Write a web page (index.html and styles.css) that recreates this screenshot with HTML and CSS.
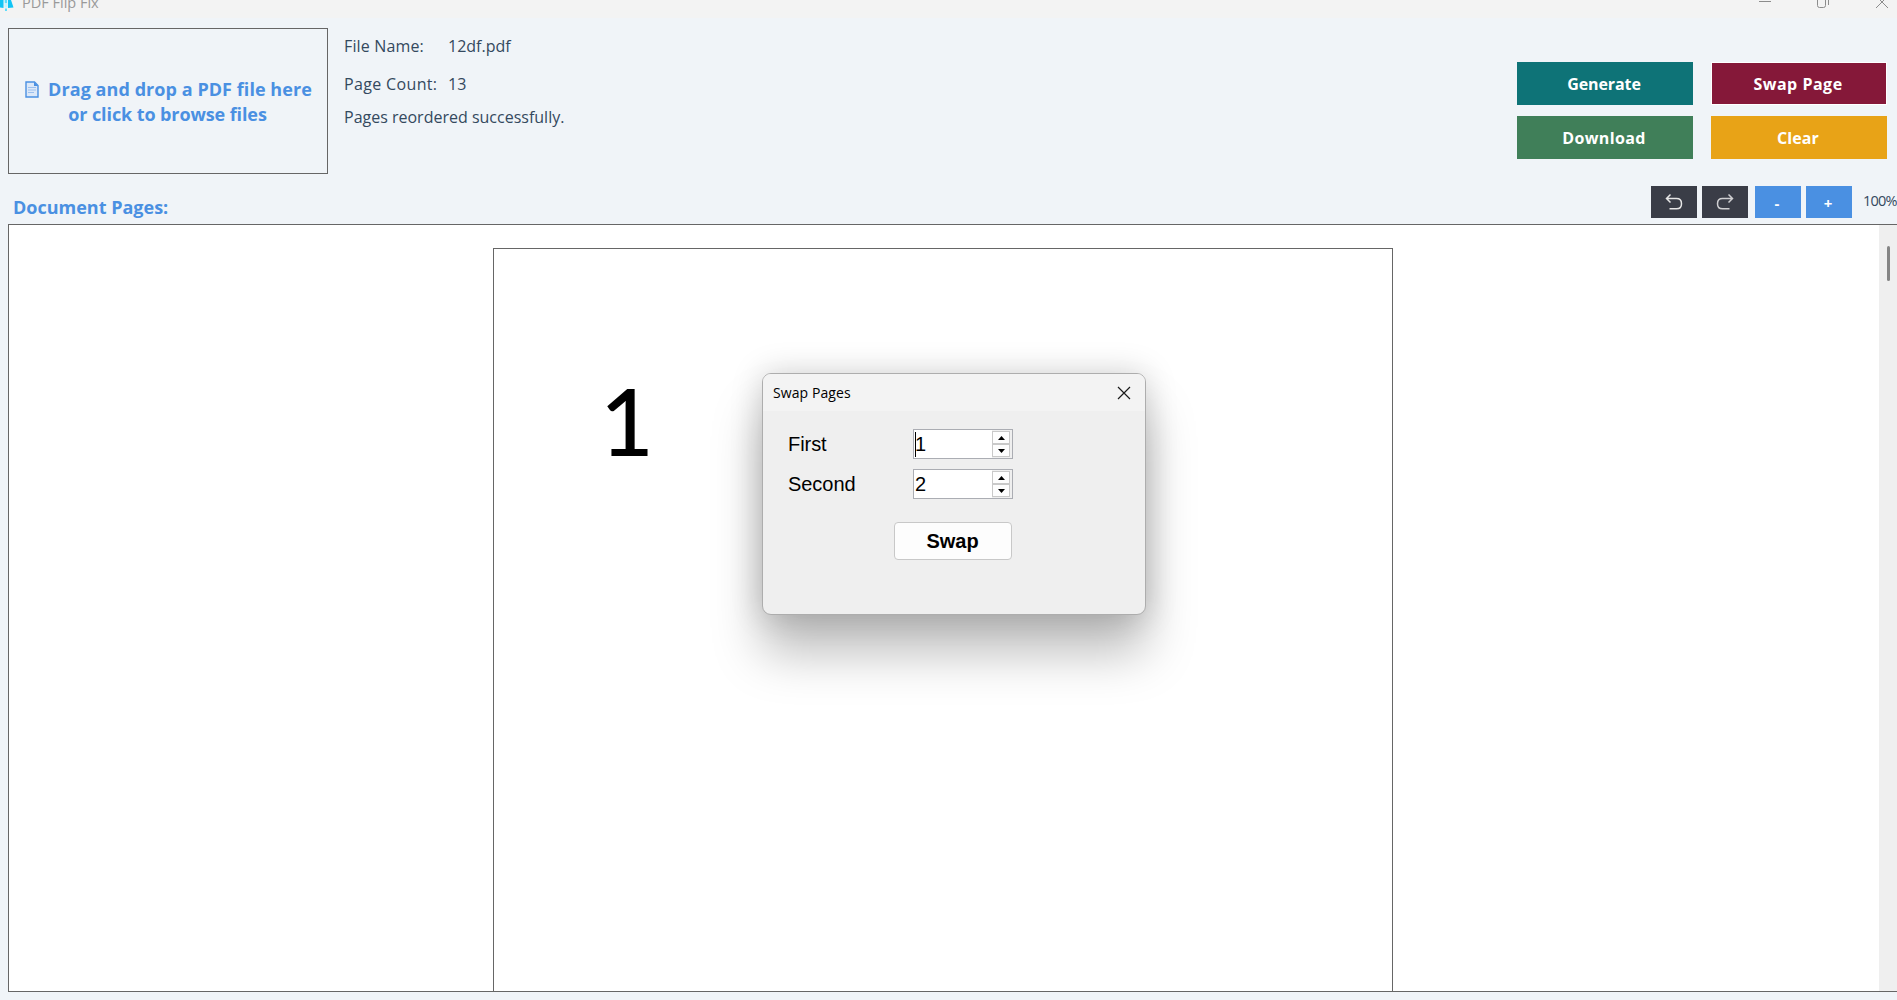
FILE: index.html
```html
<!DOCTYPE html>
<html lang="en">
<head>
<meta charset="utf-8">
<title>PDF Flip Fix</title>
<link rel="stylesheet" href="styles.css">
</head>
<body>
<div class="titlebar">
  <svg class="app-logo" width="14" height="12" viewBox="0 0 14 12"><path d="M0 0H3.500V8L0 7.500Z" fill="#12c4f5"/><path d="M8 0H11L13.500 7.500L8 8Z" fill="#12c4f5"/><path d="M4.500 0H7.500V7.500H4.500Z" fill="#c4f3ff"/><path d="M4.800 0H7V3H4.800ZM5 8.500H7V11H5Z" fill="#61dcfa"/></svg>
  <span class="app-title">PDF Flip Fix</span>
  <svg class="window-controls" width="134" height="10" viewBox="0 0 134 10" fill="none" stroke="#8c8c8c"><path d="M0 1.500H12"/><path d="M58.500 -2V5.500Q58.500 7.500 60.500 7.500H64.500Q66.500 7.500 66.500 5.500V-2M69.500 -2V5"/><path d="M117 8L129 -4M117 -4L129 8"/></svg>
</div>
<header class="header">
  <div class="dropzone">
    <div class="drop-line"><svg class="doc-icon" width="14" height="17" viewBox="0 0 14 17"><path d="M1 1H9.500L13 4.500V16H1Z" fill="#dce8f8" stroke="#4a90e2" stroke-width="1.400"/><path d="M9 1V5H13Z" fill="#4a90e2"/><path d="M3 6.500H11M3 9H11M3 11.500H9" stroke="#9cc0ee"/></svg><span class="drop-first">Drag and drop a PDF file here</span></div>
    <div class="drop-line"><span class="drop-second">or click to browse files</span></div>
  </div>
  <div class="info">
    <div class="info-row"><span class="info-label">File Name:</span><span>12df.pdf</span></div>
    <div class="info-row"><span class="info-label wide">Page Count:</span><span>13</span></div>
    <div class="info-row status"><span>Pages reordered successfully.</span></div>
  </div>
  <div class="actions">
    <button class="btn teal">Generate</button>
    <button class="btn wine">Swap Page</button>
    <button class="btn green">Download</button>
    <button class="btn amber">Clear</button>
  </div>
</header>
<div class="toolbar">
  <h1 class="section-title">Document Pages:</h1>
  <button class="tool dark"><svg width="18" height="18" viewBox="0 0 18 18" fill="none" stroke="#e6e6e6" stroke-width="1.500"><path d="M5.500 1.500L1.500 5.500L5.500 9.500M1.500 5.500H11.500Q16.500 5.500 16.500 10.700Q16.500 15.800 11.500 15.800H4.500"/></svg></button>
  <button class="tool dark redo"><svg width="18" height="18" viewBox="0 0 18 18" fill="none" stroke="#cfcfd1" stroke-width="1.500"><path d="M12.500 1.500L16.500 5.500L12.500 9.500M16.500 5.500H6.500Q1.500 5.500 1.500 10.700Q1.500 15.800 6.500 15.800H13.500"/></svg></button>
  <button class="tool blue">-</button>
  <button class="tool blue">+</button>
  <span class="zoom">100%</span>
</div>
<main class="viewer">
  <div class="canvas"><div class="page"><span class="page-number">1</span></div></div>
  <div class="scrollbar"><div class="thumb"></div></div>
</main>
<section class="dialog">
  <div class="dialog-title"><span>Swap Pages</span><svg width="14" height="14" viewBox="0 0 14 14" stroke="#1a1a1a" stroke-width="1.200"><path d="M1 1L13 13M13 1L1 13"/></svg></div>
  <div class="dialog-body">
    <div class="field"><label>First</label><div class="spin"><i class="caret"></i><span class="value">1</span><div class="steps"><b><svg width="7" height="4"><path d="M0 4L3.500 0L7 4Z"/></svg></b><b><svg width="7" height="4"><path d="M0 0L3.500 4L7 0Z"/></svg></b></div></div></div>
    <div class="field"><label>Second</label><div class="spin"><span class="value">2</span><div class="steps"><b><svg width="7" height="4"><path d="M0 4L3.500 0L7 4Z"/></svg></b><b><svg width="7" height="4"><path d="M0 0L3.500 4L7 0Z"/></svg></b></div></div></div>
    <button class="swap">Swap</button>
  </div>
</section>
</body>
</html>
```
FILE: styles.css
```css
* { box-sizing: border-box; }
body { margin: 0; height: 1000px; overflow: hidden; display: flex; flex-direction: column; background: #f0f4f8; color: #34495e; font-family: "Open Sans", sans-serif; }
button { border: 0; padding: 0; border-radius: 0; font-family: inherit; }
svg { display: block; overflow: visible; }
span { white-space: nowrap; }

.titlebar { height: 18px; flex: none; display: flex; align-items: flex-start; background: #f3f3f3; overflow: hidden; }
.app-title { margin: -7px 0 0 8px; font-size: 14.5px; line-height: 20px; color: #999; }
.window-controls { margin: 0 4px 0 auto; }

.header { height: 156px; flex: none; display: flex; padding: 10px 10px 0 8px; }
.dropzone { width: 320px; height: 146px; border: 1px solid #666; padding: 48px 0 0 1px; color: #4a90e2; font-size: 18px; font-weight: 700; line-height: 25px; }
.drop-line { display: flex; justify-content: center; align-items: center; }
.drop-first { letter-spacing: 0.06px; }
.drop-second { letter-spacing: -0.1px; margin-right: 2px; }
.doc-icon { margin-right: 9px; }
.info { padding: 6px 0 0 16px; font-size: 16px; line-height: 24px; }
.info-row { display: flex; height: 38px; }
.info-row.status { margin-top: -5px; }
.info-label { width: 104px; letter-spacing: 0.15px; }
.info-label.wide { letter-spacing: 0.35px; }
.actions { margin: 34px 0 0 auto; display: grid; grid-template-columns: 176px 176px; grid-auto-rows: 43px; gap: 11px 18px; }
.btn { color: #fff; font-size: 16px; font-weight: 700; padding-right: 2px; letter-spacing: 0.1px; }
.teal { background: #0e7377; letter-spacing: -0.1px; }
.wine { background: #851839; border: 1px solid #fff; letter-spacing: 0.5px; }
.green { background: #407f59; letter-spacing: 0.35px; }
.amber { background: #e8a317; }

.toolbar { height: 50px; flex: none; display: flex; padding: 12px 0 0 13px; }
.section-title { margin: 8px auto 0 0; font-size: 18px; line-height: 26px; color: #4a90e2; }
.tool { width: 46px; height: 32px; display: flex; align-items: center; justify-content: center; color: #fff; font-size: 15px; font-weight: 700; margin-right: 5px; padding-right: 1px; }
.dark { background: #3a3d47; }
.redo { margin-right: 7px; }
.blue { background: #4a90e2; padding: 1px 2px 0 0; }
.zoom { width: 34px; margin: 3px 0 0 6px; font-size: 14.5px; letter-spacing: -0.75px; line-height: 24px; }

.viewer { height: 768px; margin-left: 8px; flex: none; display: flex; border: 1px solid #666; border-right: 0; background: #fff; }
.canvas { flex: 1; padding: 23px 0 0 484px; }
.page { width: 900px; height: 743px; border: 1px solid #666; border-bottom: 0; padding: 115px 0 0 106px; }
.page-number { display: inline-block; font: 500 93px/112px Lato, sans-serif; color: #000; }
.scrollbar { width: 18px; background: #efefef; padding: 21px 0 0 8px; }
.thumb { width: 3px; height: 35px; border-radius: 2px; background: #858585; }

.dialog { position: absolute; left: 762px; top: 373px; width: 384px; height: 242px; border: 1px solid #adadad; border-radius: 9px; background: #efefef; color: #000; box-shadow: 0 38px 50px rgba(0,0,0,.26), 0 0 32px rgba(0,0,0,.18); }
.dialog-title { height: 37px; display: flex; justify-content: space-between; align-items: center; padding: 0 14px 0 10px; border-radius: 8px 8px 0 0; background: #f3f3f3; font-size: 14px; letter-spacing: 0.08px; }
.dialog-body { padding: 18px 0 0 25px; font-family: "Liberation Sans", sans-serif; font-size: 20px; }
.field { display: flex; height: 30px; margin-bottom: 10px; }
.field label { width: 125px; line-height: 31px; letter-spacing: -0.05px; }
.spin { width: 100px; height: 30px; display: flex; align-items: center; border: 1px solid #abadb3; background: #fff; }
.value { flex: 1; padding: 1px 0 0 1px; }
.caret { width: 1px; height: 25px; margin: 0 -2px 0 1px; background: #000; }
.steps { width: 20px; height: 28px; padding: 1px 1px 1px 0; display: grid; grid-template-rows: 13px 13px; background: #efefef; }
.steps b { width: 18px; border: 1px solid #c9c9c9; background: #fdfdfd; display: flex; align-items: center; justify-content: center; }
.swap { display: block; width: 118px; height: 38px; margin: 23px 0 0 106px; border: 1px solid #c8c8c8; border-radius: 4px; background: #fdfdfd; color: #000; font-size: 20px; font-weight: 700; padding: 1px 1px 0 0; }
```
